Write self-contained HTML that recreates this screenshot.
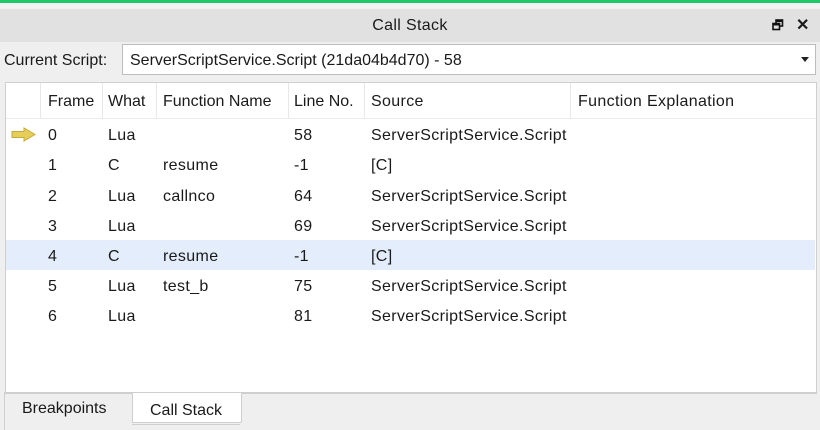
<!DOCTYPE html>
<html><head><style>
body{margin:0;width:820px;height:430px;background:#efefef;font-family:"Liberation Sans",sans-serif;font-size:16px;color:#1a1a1a;position:relative;overflow:hidden;letter-spacing:0.35px}
.a{position:absolute}
.t{position:absolute;white-space:nowrap;line-height:30px;margin-top:2px}
</style></head><body>
<div class="a" style="left:0;top:0;width:820px;height:3px;background:#1fc66a"></div>
<div class="a" style="left:0;top:3px;width:820px;height:6px;background:#f2f2f2"></div>
<div class="a" style="left:0;top:9px;width:820px;height:33px;background:#e1e1e1"></div>
<div class="t" style="left:0;width:820px;text-align:center;top:9px">Call Stack</div>
<svg class="a" style="left:772px;top:19px" width="12" height="12" viewBox="0 0 12 12"><rect x="4" y="1" width="6.5" height="6" fill="none" stroke="#111" stroke-width="1.6"/><rect x="1" y="4.5" width="6.5" height="6" fill="#e1e1e1" stroke="#111" stroke-width="1.6"/><rect x="4" y="1" width="6.5" height="2" fill="#111"/><rect x="1" y="4.5" width="6.5" height="2" fill="#111"/></svg>
<div class="t" style="left:796px;top:9px;font-size:16px;font-weight:bold">✕</div>
<div class="t" style="left:4px;top:44px;letter-spacing:0">Current Script:</div>
<div class="a" style="left:122px;top:44px;width:692px;height:29px;background:#fff;border:1px solid #bdbdbd"></div>
<div class="t" style="left:130px;top:44px;letter-spacing:0">ServerScriptService.Script (21da04b4d70) - 58</div>
<div class="a" style="left:801px;top:57px;width:0;height:0;border-left:4px solid transparent;border-right:4px solid transparent;border-top:5px solid #222"></div>
<div class="a" style="left:5px;top:82px;width:810px;height:310px;background:#fff;border:1px solid #cfcfcf"></div>
<div class="a" style="left:6px;top:118px;width:810px;height:1px;background:#ececec"></div>
<div class="a" style="left:40px;top:83px;width:1px;height:35px;background:#e8e8e8"></div>
<div class="a" style="left:102px;top:83px;width:1px;height:35px;background:#e8e8e8"></div>
<div class="a" style="left:156px;top:83px;width:1px;height:35px;background:#e8e8e8"></div>
<div class="a" style="left:288px;top:83px;width:1px;height:35px;background:#e8e8e8"></div>
<div class="a" style="left:364px;top:83px;width:1px;height:35px;background:#e8e8e8"></div>
<div class="a" style="left:570px;top:83px;width:1px;height:35px;background:#e8e8e8"></div>
<div class="t" style="left:48px;top:85px;letter-spacing:0">Frame</div>
<div class="t" style="left:108px;top:85px;letter-spacing:0">What</div>
<div class="t" style="left:163px;top:85px;letter-spacing:0">Function Name</div>
<div class="t" style="left:294px;top:85px;letter-spacing:0">Line No.</div>
<div class="t" style="left:371px;top:85px">Source</div>
<div class="t" style="left:578px;top:85px">Function Explanation</div>
<div class="a" style="left:6px;top:240px;width:809px;height:30px;background:#e3edfb"></div>
<svg class="a" style="left:11px;top:127px" width="25" height="15" viewBox="0 0 25 15"><path d="M1 4.5H13V1L24 7.5L13 14V10.5H1Z" fill="#e5cf5a" stroke="#c6aa3a" stroke-width="1"/></svg>
<div class="t" style="left:48px;top:119px">0</div><div class="t" style="left:108px;top:119px">Lua</div><div class="t" style="left:294px;top:119px">58</div><div class="t" style="left:371px;top:119px">ServerScriptService.Script</div>
<div class="t" style="left:48px;top:149px">1</div><div class="t" style="left:108px;top:149px">C</div><div class="t" style="left:163px;top:149px">resume</div><div class="t" style="left:294px;top:149px">-1</div><div class="t" style="left:371px;top:149px">[C]</div>
<div class="t" style="left:48px;top:180px">2</div><div class="t" style="left:108px;top:180px">Lua</div><div class="t" style="left:163px;top:180px">callnco</div><div class="t" style="left:294px;top:180px">64</div><div class="t" style="left:371px;top:180px">ServerScriptService.Script</div>
<div class="t" style="left:48px;top:210px">3</div><div class="t" style="left:108px;top:210px">Lua</div><div class="t" style="left:294px;top:210px">69</div><div class="t" style="left:371px;top:210px">ServerScriptService.Script</div>
<div class="t" style="left:48px;top:240px">4</div><div class="t" style="left:108px;top:240px">C</div><div class="t" style="left:163px;top:240px">resume</div><div class="t" style="left:294px;top:240px">-1</div><div class="t" style="left:371px;top:240px">[C]</div>
<div class="t" style="left:48px;top:270px">5</div><div class="t" style="left:108px;top:270px">Lua</div><div class="t" style="left:163px;top:270px">test_b</div><div class="t" style="left:294px;top:270px">75</div><div class="t" style="left:371px;top:270px">ServerScriptService.Script</div>
<div class="t" style="left:48px;top:300px">6</div><div class="t" style="left:108px;top:300px">Lua</div><div class="t" style="left:294px;top:300px">81</div><div class="t" style="left:371px;top:300px">ServerScriptService.Script</div>
<div class="a" style="left:4px;top:392px;width:812px;height:1px;background:#cfcfcf"></div>
<div class="a" style="left:4px;top:393px;width:1px;height:37px;background:#cfcfcf"></div>
<div class="a" style="left:132px;top:393px;width:108px;height:29px;background:#fff;border-left:1px solid #cfcfcf;border-right:1px solid #cfcfcf;border-bottom:1px solid #cfcfcf"></div>
<div class="a" style="left:132px;top:424px;width:108px;height:1px;background:#cfcfcf"></div>
<div class="t" style="left:22px;top:392px;letter-spacing:0">Breakpoints</div>
<div class="t" style="left:150px;top:394px;letter-spacing:0">Call Stack</div>
</body></html>
